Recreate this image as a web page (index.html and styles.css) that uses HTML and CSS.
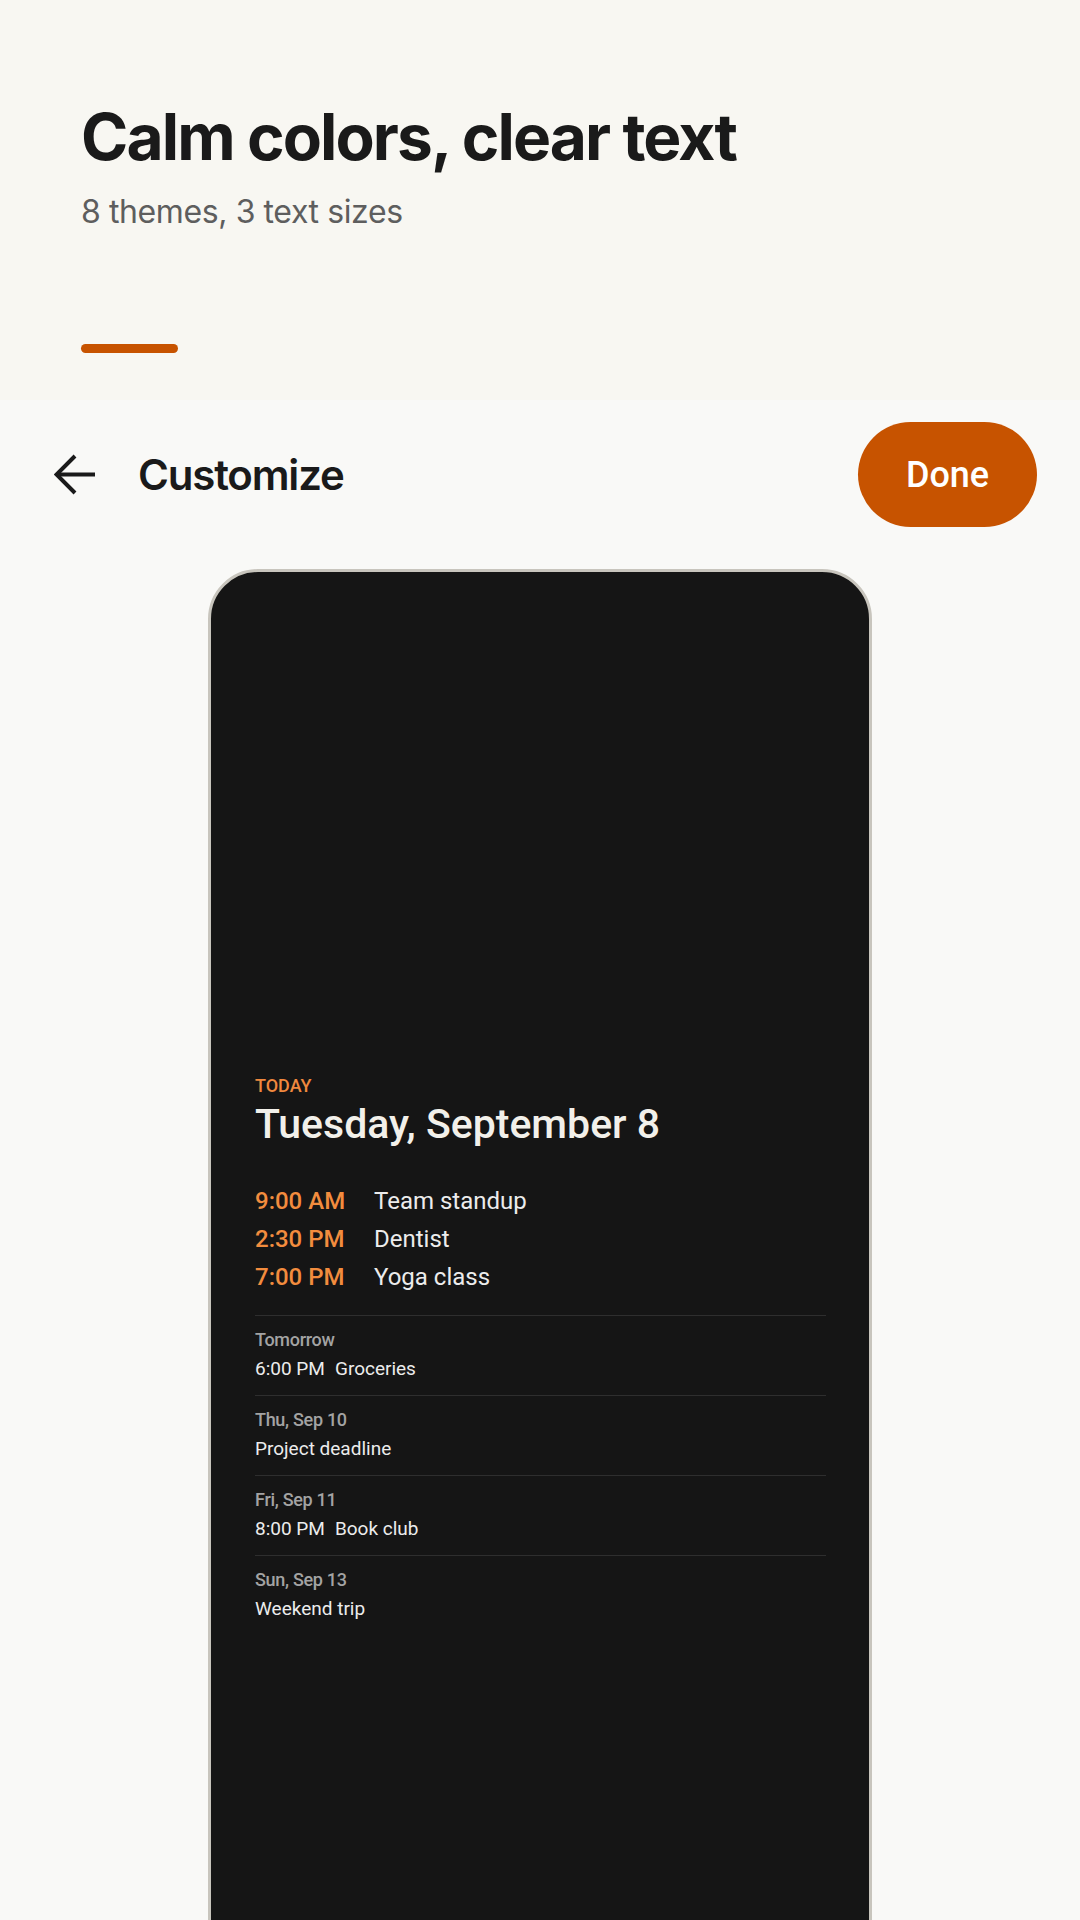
FILE: index.html
```html
<!DOCTYPE html>
<html lang="en">
<head>
<meta charset="utf-8">
<title>Customize</title>
<link rel="stylesheet" href="styles.css">
</head>
<body>
<div class="page">
  <header class="hero">
    <h1 class="hero-title">Calm colors, clear text</h1>
    <p class="hero-sub">8 themes, 3 text sizes</p>
    <div class="hero-bar"></div>
  </header>

  <div class="toolbar">
    <button class="back" aria-label="Back">
      <svg width="41" height="41" viewBox="0 0 41 41" fill="none" stroke="#1a1a1a" stroke-width="4" stroke-linecap="butt" stroke-linejoin="miter">
        <path d="M41 20.5H3"/>
        <path d="M21 2L2.5 20.5L21 39"/>
      </svg>
    </button>
    <div class="toolbar-title">Customize</div>
    <button class="done">Done</button>
  </div>

  <div class="phone">
    <div class="screen">
      <div class="today">TODAY</div>
      <div class="date">Tuesday, September 8</div>
      <ul class="events">
        <li><span class="ev-time">9:00 AM</span><span class="ev-name">Team standup</span></li>
        <li><span class="ev-time">2:30 PM</span><span class="ev-name">Dentist</span></li>
        <li><span class="ev-time">7:00 PM</span><span class="ev-name">Yoga class</span></li>
      </ul>
      <div class="upcoming">
        <div class="group">
          <div class="g-label">Tomorrow</div>
          <div class="g-body"><span class="g-time">6:00 PM</span>Groceries</div>
        </div>
        <div class="group">
          <div class="g-label">Thu, Sep 10</div>
          <div class="g-body">Project deadline</div>
        </div>
        <div class="group">
          <div class="g-label">Fri, Sep 11</div>
          <div class="g-body"><span class="g-time">8:00 PM</span>Book club</div>
        </div>
        <div class="group">
          <div class="g-label">Sun, Sep 13</div>
          <div class="g-body">Weekend trip</div>
        </div>
      </div>
    </div>
  </div>
</div>
</body>
</html>
```

FILE: styles.css
```css
* { box-sizing: border-box; }

html, body {
  margin: 0;
  padding: 0;
  height: 1920px;
  overflow: hidden;
  background: #f9f9f7;
}

.page {
  width: 1080px;
  height: 1920px;
  overflow: hidden;
  display: flex;
  flex-direction: column;
}

.page > * { flex-shrink: 0; }

/* Hero header */
.hero {
  background: #f8f7f2;
  height: 400px;
  padding: 98px 0 0 81px;
  display: flex;
  flex-direction: column;
  align-items: flex-start;
}

.hero-title {
  margin: 0;
  font-family: Inter, "Liberation Sans", sans-serif;
  font-weight: 700;
  font-size: 64px;
  line-height: 77px;
  letter-spacing: -1.9px;
  color: #1a1a1a;
}

.hero-sub {
  margin: 17px 0 0;
  font-family: Inter, "Liberation Sans", sans-serif;
  font-weight: 400;
  font-size: 32px;
  line-height: 40px;
  letter-spacing: -0.4px;
  color: #5e5e5e;
}

.hero-bar {
  margin-top: 112px;
  width: 97px;
  height: 9px;
  border-radius: 5px;
  background: #c75300;
}

/* Toolbar */
.toolbar {
  display: flex;
  align-items: center;
  padding: 22px 43px 0 54px;
}

.back {
  border: 0;
  padding: 0;
  background: none;
  width: 41px;
  height: 41px;
  display: flex;
}

.toolbar-title {
  margin-left: 43px;
  flex: 1;
  font-family: Inter, "Liberation Sans", sans-serif;
  font-weight: 600;
  font-size: 42px;
  letter-spacing: -1.2px;
  color: #1a1a1a;
}

.done {
  border: 0;
  width: 179px;
  height: 105px;
  border-radius: 53px;
  background: #c75300;
  color: #ffffff;
  font-family: Roboto, "Liberation Sans", sans-serif;
  font-weight: 500;
  font-size: 36px;
  padding: 0;
}

/* Phone preview */
.phone {
  margin: 42px auto 0;
  width: 664px;
  height: 1500px;
  border: 3px solid #c8c5bd;
  border-radius: 50px;
  background: #151515;
  overflow: hidden;
}

.screen {
  padding: 503px 43px 0 44px;
  font-family: Roboto, "Liberation Sans", sans-serif;
}

.today {
  font-size: 18px;
  line-height: 22px;
  font-weight: 500;
  color: #f0883e;
}

.date {
  margin-top: 3px;
  font-size: 41px;
  line-height: 48px;
  font-weight: 500;
  color: #f2f0ea;
}

.events {
  list-style: none;
  margin: 34px 0 0;
  padding: 0;
}

.events li {
  display: flex;
  font-size: 24px;
  line-height: 38px;
}

.ev-time {
  width: 119px;
  font-weight: 500;
  color: #f28c3e;
}

.ev-name {
  font-weight: 400;
  color: #ececec;
}

.upcoming {
  margin-top: 19px;
}

.group {
  border-top: 1px solid #2e2e2e;
  padding: 11px 0 10px;
}

.g-label {
  font-size: 18px;
  line-height: 26px;
  font-weight: 500;
  letter-spacing: -0.3px;
  color: #a3a3a3;
}

.g-body {
  font-size: 19px;
  line-height: 32px;
  color: #ececec;
}

.g-time {
  margin-right: 10px;
}
```
